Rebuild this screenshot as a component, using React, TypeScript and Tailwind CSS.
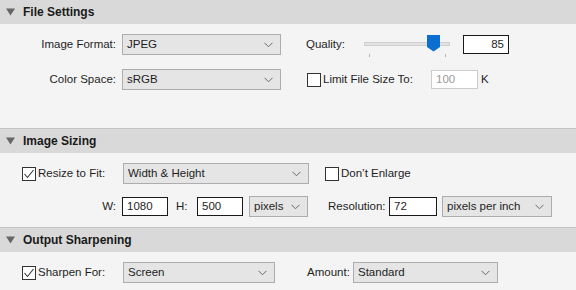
import type React from "react"

function Chevron() {
  return (
    <svg width="9" height="6" viewBox="0 0 9 6" className="shrink-0">
      <path d="M0.5 0.8 L4.5 4.8 L8.5 0.8" fill="none" stroke="#6a6a6a" strokeWidth="1" />
    </svg>
  )
}

function Select({ value, width }: { value: string; width: string }) {
  return (
    <div
      className={`${width} h-[21px] flex items-center justify-between pl-[4px] pr-[7px] bg-[#e5e5e5] border border-[#adadad] shrink-0`}
    >
      <span>{value}</span>
      <Chevron />
    </div>
  )
}

function TextBox({ value, width, right, disabled }: { value: string; width: string; right?: boolean; disabled?: boolean }) {
  return (
    <div
      className={`${width} h-[19px] flex items-center px-[4px] bg-white border shrink-0 ${
        disabled ? "border-[#cccccc] text-[#9a9a9a]" : "border-[#1a1a1a]"
      } ${right ? "justify-end" : ""}`}
    >
      {value}
    </div>
  )
}

function Check({ checked }: { checked?: boolean }) {
  return (
    <div className="w-[14px] h-[14px] border border-[#333333] bg-white shrink-0 flex items-center justify-center">
      {checked && (
        <svg width="12" height="12" viewBox="0 0 12 12">
          <path d="M1.5 6 L4.5 9.5 L10.5 2" fill="none" stroke="#333333" strokeWidth="1.1" />
        </svg>
      )}
    </div>
  )
}

function Section({ title, first, children }: { title: string; first?: boolean; children: React.ReactNode }) {
  return (
    <div>
      <div className={`h-[24px] bg-[#d9d9d9] flex items-center ${first ? "" : "border-t border-[#c4c4c4] h-[25px]"}`}>
        <svg width="9" height="8" viewBox="0 0 9 8" className="ml-[6px]">
          <path d="M0 0.5 L9 0.5 L4.5 7.5 Z" fill="#666666" />
        </svg>
        <span className="ml-[8px] font-bold text-[12px] text-[#1a1a1a]">{title}</span>
      </div>
      {children}
    </div>
  )
}

function Slider() {
  return (
    <div className="relative w-[86px] h-[21px] shrink-0">
      <div className="absolute left-0 right-0 top-[8px] h-[4px] bg-[#e2e2e2] border border-[#d0d0d0]" />
      <svg width="13" height="17" viewBox="0 0 13 17" className="absolute left-[63px] top-[1px]">
        <path d="M0 0 L13 0 L13 12 L6.5 16.5 L0 12 Z" fill="#0a6fd1" />
      </svg>
      <div className="absolute left-[5px] top-[20px] w-px h-[3px] bg-[#b5b5b5]" />
      <div className="absolute left-[81px] top-[20px] w-px h-[3px] bg-[#b5b5b5]" />
    </div>
  )
}

export default function App() {
  return (
    <div
      className="w-[576px] h-[290px] overflow-hidden bg-[#f4f4f4] text-[11.5px] text-[#1e1e1e]"
      style={{ fontFamily: '"Liberation Sans", Arial, sans-serif' }}
    >
      <Section title="File Settings" first>
        <div className="h-[104px] pt-[10px]">
          <div className="flex items-center h-[21px]">
            <span className="w-[116px] text-right shrink-0">Image Format:</span>
            <div className="ml-[6px]">
              <Select value="JPEG" width="w-[159px]" />
            </div>
            <span className="ml-[25px] w-[58px] shrink-0">Quality:</span>
            <Slider />
            <div className="ml-[13px]">
              <TextBox value="85" width="w-[46px]" right />
            </div>
          </div>
          <div className="flex items-center h-[21px] mt-[14px]">
            <span className="w-[116px] text-right shrink-0">Color Space:</span>
            <div className="ml-[6px]">
              <Select value="sRGB" width="w-[159px]" />
            </div>
            <div className="ml-[26px]">
              <Check />
            </div>
            <span className="ml-[2px] w-[108px] shrink-0">Limit File Size To:</span>
            <TextBox value="100" width="w-[47px]" disabled />
            <span className="ml-[3px]">K</span>
          </div>
        </div>
      </Section>

      <Section title="Image Sizing">
        <div className="h-[74px] pt-[10px]">
          <div className="flex items-center h-[21px]">
            <div className="ml-[22px]">
              <Check checked />
            </div>
            <span className="ml-[2px] w-[85px] shrink-0">Resize to Fit:</span>
            <Select value="Width & Height" width="w-[186px]" />
            <div className="ml-[16px]">
              <Check />
            </div>
            <span className="ml-[2px]">Don’t Enlarge</span>
          </div>
          <div className="flex items-center h-[21px] mt-[12px]">
            <span className="w-[116px] text-right shrink-0">W:</span>
            <div className="ml-[6px]">
              <TextBox value="1080" width="w-[46px]" />
            </div>
            <span className="w-[29px] pl-[8px] shrink-0">H:</span>
            <TextBox value="500" width="w-[46px]" />
            <div className="ml-[6px]">
              <Select value="pixels" width="w-[59px]" />
            </div>
            <span className="ml-[20px] w-[61px] shrink-0">Resolution:</span>
            <TextBox value="72" width="w-[48px]" />
            <div className="ml-[5px]">
              <Select value="pixels per inch" width="w-[110px]" />
            </div>
          </div>
        </div>
      </Section>

      <Section title="Output Sharpening">
        <div className="h-[40px] pt-[10px]">
          <div className="flex items-center h-[21px]">
            <div className="ml-[22px]">
              <Check checked />
            </div>
            <span className="ml-[2px] w-[85px] shrink-0">Sharpen For:</span>
            <Select value="Screen" width="w-[152px]" />
            <span className="ml-[32px] w-[46px] shrink-0">Amount:</span>
            <Select value="Standard" width="w-[145px]" />
          </div>
        </div>
      </Section>
    </div>
  )
}
